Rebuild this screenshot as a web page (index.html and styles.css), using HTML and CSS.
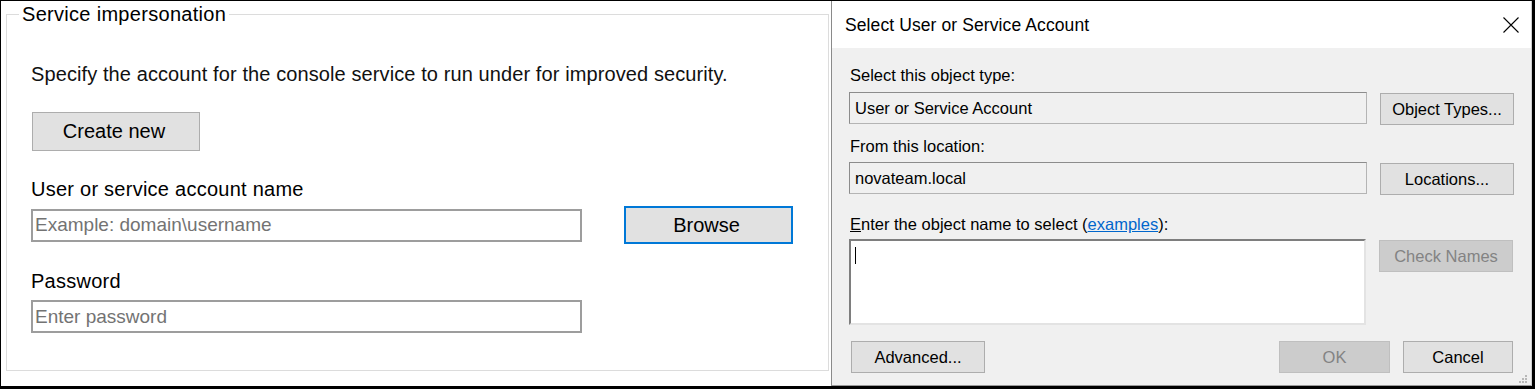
FILE: index.html
```html
<!DOCTYPE html>
<html lang="en">
<head>
<meta charset="utf-8">
<title>Service impersonation</title>
<link rel="stylesheet" href="styles.css">
</head>
<body>
<div class="screen">
  <section class="panel">
    <fieldset class="group">
      <legend class="group-title">Service impersonation</legend>
      <div class="group-body">
        <p class="intro">Specify the account for the console service to run under for improved security.</p>
        <button class="btn btn-create" type="button">Create new</button>
        <label class="field-label" for="acct">User or service account name</label>
        <div class="field-row">
          <input class="text-input" id="acct" type="text" placeholder="Example: domain\username">
          <button class="btn btn-browse" type="button">Browse</button>
        </div>
        <label class="field-label field-label-pw" for="pw">Password</label>
        <input class="text-input text-input-pw" id="pw" type="text" placeholder="Enter password">
      </div>
    </fieldset>
  </section>

  <section class="dialog">
    <header class="titlebar">
      <span class="title">Select User or Service Account</span>
      <svg class="close" width="16" height="16" viewBox="0 0 16 16" aria-hidden="true">
        <path d="M0.5 0.5 L15.5 15.5 M15.5 0.5 L0.5 15.5" stroke="#000" stroke-width="1.1" fill="none"/>
      </svg>
    </header>
    <div class="dlg-body">
      <div class="dlg-label dlg-label-first">Select this object type:</div>
      <div class="dlg-row">
        <div class="ro-box">User or Service Account</div>
        <button class="dbtn" type="button">Object Types...</button>
      </div>
      <div class="dlg-label dlg-label-second">From this location:</div>
      <div class="dlg-row dlg-row-second">
        <div class="ro-box">novateam.local</div>
        <button class="dbtn" type="button">Locations...</button>
      </div>
      <div class="dlg-label dlg-label-third"><u>E</u>nter the object name to select (<a class="link" href="#">examples</a>):</div>
      <div class="dlg-row dlg-row-names">
        <div class="names-box"><span class="caret"></span></div>
        <button class="dbtn dbtn-disabled dbtn-check" type="button">Check Names</button>
      </div>
      <div class="dlg-footer">
        <button class="dbtn dbtn-adv" type="button">Advanced...</button>
        <div class="footer-actions">
          <button class="dbtn dbtn-disabled dbtn-ok" type="button">OK</button>
          <button class="dbtn dbtn-cancel" type="button">Cancel</button>
        </div>
      </div>
    </div>
    <svg class="grip" width="9" height="9" viewBox="0 0 9 9" aria-hidden="true">
      <rect x="6" y="0" width="2" height="2" fill="#b8b8b8"/>
      <rect x="3" y="3" width="2" height="2" fill="#b8b8b8"/>
      <rect x="6" y="3" width="2" height="2" fill="#b8b8b8"/>
      <rect x="0" y="6" width="2" height="2" fill="#b8b8b8"/>
      <rect x="3" y="6" width="2" height="2" fill="#b8b8b8"/>
      <rect x="6" y="6" width="2" height="2" fill="#b8b8b8"/>
    </svg>
  </section>
</div>
</body>
</html>
```
FILE: styles.css
```css
* {
  box-sizing: border-box;
}

html,
body {
  margin: 0;
  padding: 0;
}

body {
  width: 1535px;
  height: 389px;
  overflow: hidden;
  background: #000;
  font-family: "Liberation Sans", Arial, sans-serif;
  color: #000;
}

.screen {
  display: flex;
  height: 389px;
  padding: 1px 3px 3px 1px;
}

/* ---------- left panel ---------- */

.panel {
  width: 830px;
  flex: none;
  display: flex;
  flex-direction: column;
  background: #fff;
  padding: 1px 2px 15px 5px;
}

.group {
  flex: 1;
  min-width: 0;
  margin: 0;
  padding: 0;
  border: 1px solid #dcdcdc;
}

.group-title {
  margin-left: 12px;
  padding: 0 3px;
  font-size: 20px;
  line-height: 24px;
  letter-spacing: 0.3px;
  color: #000;
}

.group-body {
  display: flex;
  flex-direction: column;
  align-items: flex-start;
  padding-left: 24px;
}

.intro {
  margin: 36px 0 0;
  font-size: 20px;
  line-height: 24px;
  letter-spacing: 0.1px;
  color: #111;
}

.btn {
  font-family: inherit;
  font-size: 20px;
  color: #000;
  background: #e1e1e1;
  border: 1px solid #adadad;
  padding: 0;
  margin: 0;
}

.btn-create {
  width: 168px;
  height: 39px;
  margin-top: 26px;
  margin-left: 1px;
  padding-right: 4px;
}

.field-label {
  display: block;
  margin-top: 26px;
  font-size: 20px;
  line-height: 24px;
  letter-spacing: 0.25px;
}

.field-label-pw {
  margin-top: 25px;
}

.field-row {
  display: flex;
  align-items: center;
  margin-top: 5px;
  height: 38px;
}

.text-input {
  width: 551px;
  height: 33px;
  margin: 0;
  padding: 0 2px;
  border: 2px solid #9d9d9d;
  background: #fff;
  font-family: inherit;
  font-size: 19px;
  color: #000;
  outline: none;
}

.text-input::placeholder {
  color: #737373;
  opacity: 1;
}

.text-input-pw {
  margin-top: 7px;
}

.btn-browse {
  width: 169px;
  height: 38px;
  margin-left: 42px;
  border: 2px solid #0078d7;
  padding-right: 4px;
}

/* ---------- dialog ---------- */

.dialog {
  flex: 1;
  min-width: 0;
  display: flex;
  flex-direction: column;
  position: relative;
  background: #f0f0f0;
  border-left: 1px solid #8a8a8a;
  border-right: 1px solid #cfcfcf;
  border-bottom: 1px solid #9a9a9a;
}

.titlebar {
  flex: none;
  height: 47px;
  display: flex;
  align-items: center;
  justify-content: space-between;
  padding: 0 12px 0 13px;
  background: #fff;
}

.title {
  font-size: 17.5px;
  line-height: 22px;
  letter-spacing: 0.1px;
}

.close {
  display: block;
  margin-top: 1px;
}

.dlg-body {
  flex: 1;
  display: flex;
  flex-direction: column;
  padding: 0 17px 0 17px;
  font-size: 16.5px;
}

.dlg-label {
  line-height: 20px;
  padding-left: 1px;
}

.dlg-label-first {
  margin-top: 17px;
}

.dlg-label-second {
  margin-top: 11px;
}

.dlg-label-third {
  margin-top: 19px;
}

.dlg-row {
  display: flex;
  align-items: flex-start;
  margin-top: 7px;
}

.dlg-row-second {
  margin-top: 6px;
}

.dlg-row-names {
  margin-top: 5px;
}

.ro-box {
  width: 518px;
  height: 32px;
  padding: 0 5px;
  display: flex;
  align-items: center;
  background: #f0f0f0;
  border: 1px solid #8c8c8c;
  border-right-color: #b4b4b4;
  border-bottom-color: #b4b4b4;
}

.dbtn {
  font-family: inherit;
  font-size: 16.5px;
  color: #000;
  background: #e1e1e1;
  border: 1px solid #adadad;
  padding: 0;
  margin: 0;
  height: 32px;
}

.dlg-row .dbtn {
  width: 134px;
  margin-left: 13px;
  margin-top: 1px;
}

.dbtn-disabled {
  background: #cccccc;
  border-color: #bfbfbf;
  color: #838383;
}

.names-box {
  width: 517px;
  height: 86px;
  background: #fff;
  border-style: solid;
  border-width: 2px;
  border-color: #7e7e7e #e3e3e3 #e3e3e3 #7e7e7e;
  padding: 6px 0 0 4px;
}

.caret {
  display: block;
  width: 1px;
  height: 17px;
  background: #000;
}

.link {
  color: #0066cc;
  text-decoration: underline;
}

.dlg-footer {
  display: flex;
  justify-content: space-between;
  align-items: flex-start;
  margin-top: 16px;
}

.dbtn-adv {
  width: 134px;
  margin-left: 2px;
}

.footer-actions {
  display: flex;
  gap: 13px;
  margin-right: 1px;
}

.dbtn-ok {
  width: 111px;
}

.dbtn-cancel {
  width: 110px;
}

.grip {
  position: absolute;
  right: 3px;
  bottom: 1px;
}
```
